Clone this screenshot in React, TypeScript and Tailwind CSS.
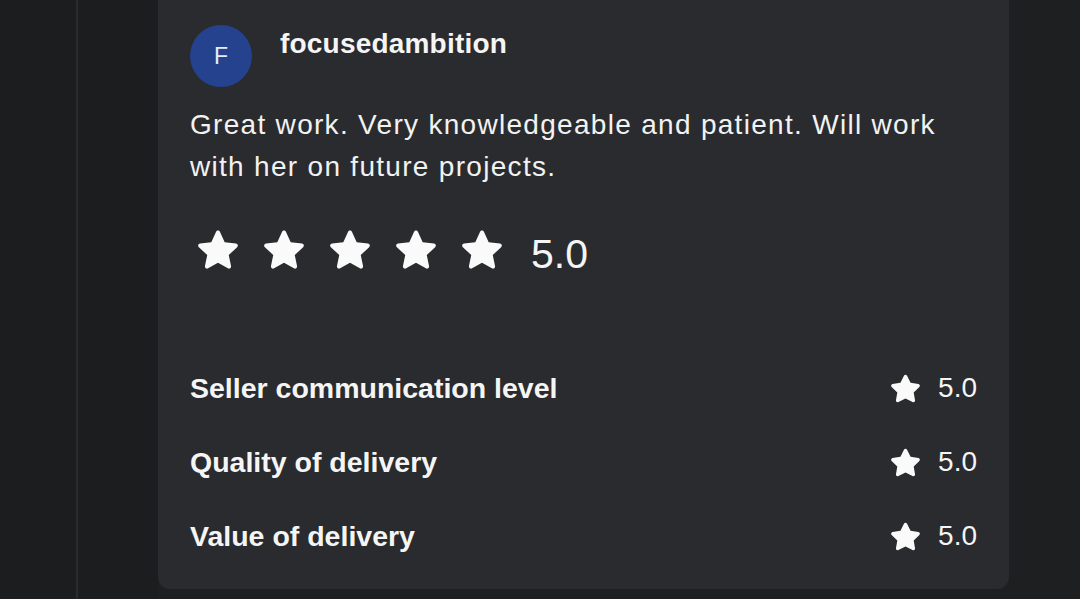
import { FaStar } from 'react-icons/fa';

const ROWS = [
  { label: 'Seller communication level', value: '5.0' },
  { label: 'Quality of delivery', value: '5.0' },
  { label: 'Value of delivery', value: '5.0' },
];

function Star({ className }: { className?: string }) {
  return (
    <svg viewBox="0 0 24 24" className={className} fill="currentColor">
      <path d="M12 2.2c.4 0 .75.23.92.6l2.3 5 5.4.6c.4.05.74.32.86.7.12.39 0 .8-.3 1.07l-4.02 3.7 1.1 5.36c.08.4-.08.8-.4 1.04-.33.24-.76.26-1.11.06L12 17.6l-4.75 2.73c-.35.2-.78.18-1.1-.06-.33-.24-.49-.64-.41-1.04l1.1-5.36-4.02-3.7a1.02 1.02 0 0 1-.3-1.07c.12-.38.46-.65.86-.7l5.4-.6 2.3-5c.17-.37.52-.6.92-.6z" />
    </svg>
  );
}

export default function App() {
  return (
    <div
      className="flex h-[599px] w-[1080px] overflow-hidden bg-[#1e1f21] text-white"
      style={{ fontFamily: '"Liberation Sans", Arial, sans-serif' }}
    >
      <div className="w-[76px] shrink-0 bg-[#1c1d1f]" />
      <div className="w-[2px] shrink-0 bg-[#2a2b2d]" />
      <div className="w-[80px] shrink-0 bg-[#1c1d1f]" />
      <div className="flex w-[851px] shrink-0 flex-col">
        <div className="flex h-[589px] flex-col rounded-b-[12px] bg-[#2a2b2f] pl-[32px] pr-[32px]">
          <div className="mt-[25px] flex items-start gap-[28px]">
            <div className="flex h-[62px] w-[62px] items-center justify-center rounded-full bg-[#25428f] text-[23px] text-[#e6ebf7]">
              F
            </div>
            <div className="mt-[4px] text-[28px] font-bold leading-[30px] tracking-[0.2px] text-[#f5f5f5]">
              focusedambition
            </div>
          </div>
          <p className="mt-[17px] max-w-[760px] text-[28px] leading-[42px] tracking-[1.3px] text-[#f2f2f2]">
            Great work. Very knowledgeable and patient. Will work with her on future projects.
          </p>
          <div className="mt-[38px] ml-[3px] flex items-center">
            <div className="flex gap-[16px]">
              {[0, 1, 2, 3, 4].map((i) => (
                <Star key={i} className="h-[50px] w-[50px] text-[#fafafa]" />
              ))}
            </div>
            <span className="ml-[24px] mt-[6px] text-[41px] leading-none text-[#f5f5f5]">5.0</span>
          </div>
          <div className="mt-[95px] flex flex-col gap-[40px]">
            {ROWS.map((r) => (
              <div key={r.label} className="flex h-[34px] items-center justify-between">
                <span className="text-[28.5px] font-bold text-[#f5f5f5]">{r.label}</span>
                <span className="flex items-center gap-[17px]">
                  <FaStar className="h-[31px] w-[31px] text-[#fafafa]" />
                  <span className="text-[28px] text-[#f5f5f5]">{r.value}</span>
                </span>
              </div>
            ))}
          </div>
        </div>
      </div>
      <div className="flex-1 bg-[#1e1f21]" />
    </div>
  );
}
